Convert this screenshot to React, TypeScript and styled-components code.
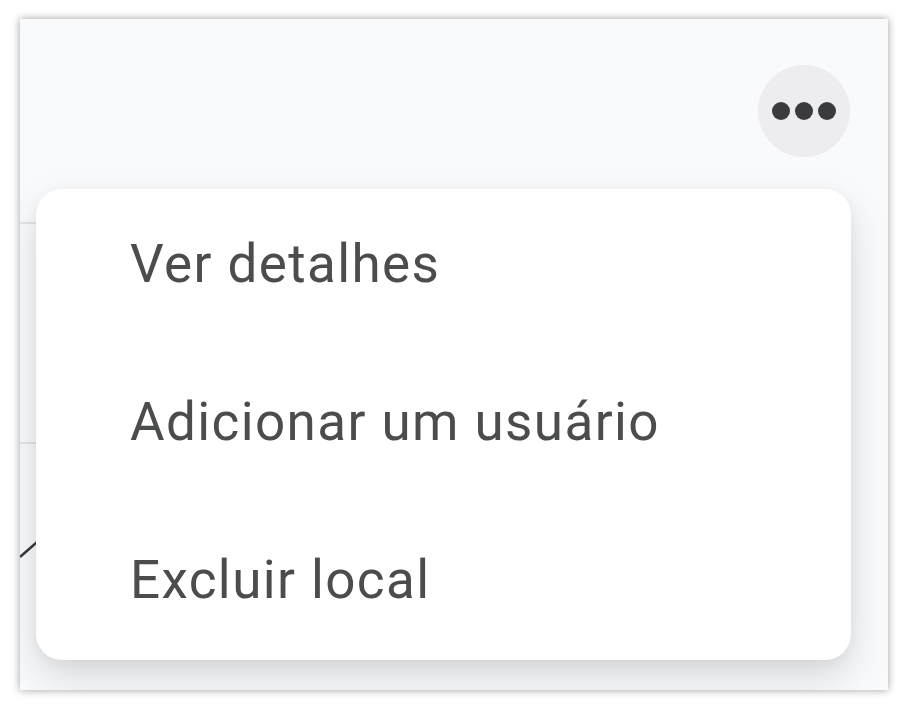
import styled, { createGlobalStyle } from 'styled-components';

const GlobalStyle = createGlobalStyle`
  html, body {
    margin: 0;
    padding: 0;
    background: #ffffff;
  }
  body {
    font-family: Roboto, 'Noto Sans', Arial, sans-serif;
  }
`;

const Page = styled.div`
  box-sizing: border-box;
  width: 910px;
  height: 710px;
  padding: 19px 22px 20px 20px;
`;

const Window = styled.div`
  position: relative;
  height: 100%;
  background: #f9fafc;
  box-shadow: 0 0 8px rgba(0, 0, 0, 0.38);
  overflow: hidden;
`;

const Header = styled.header`
  display: flex;
  justify-content: flex-end;
  padding: 46px 38px 0 0;
`;

const MoreButton = styled.button`
  width: 92px;
  height: 92px;
  border: none;
  border-radius: 50%;
  background: #ececf1;
  display: flex;
  align-items: center;
  justify-content: center;
  padding: 0;
  cursor: pointer;
`;

const Table = styled.div`
  display: flex;
  flex-direction: column;
  width: 320px;
  margin-top: 65px;
`;

const TableRow = styled.div`
  height: 218px;
  border-top: 2px solid #e3e4e6;
`;

const Chart = styled.svg`
  display: block;
  margin-top: 90px;
`;

const Menu = styled.ul`
  position: absolute;
  left: 16px;
  top: 170px;
  width: 815px;
  height: 471px;
  box-sizing: border-box;
  margin: 0;
  padding: 5px 0 10px;
  list-style: none;
  display: flex;
  flex-direction: column;
  gap: 18px;
  background: #ffffff;
  border-radius: 26px;
  box-shadow: 0 18px 40px rgba(0, 0, 0, 0.13), 0 4px 14px rgba(0, 0, 0, 0.05);
`;

const MenuItem = styled.li`
  height: 140px;
  display: flex;
  align-items: center;
  padding-left: 94px;
  font-size: 53px;
  letter-spacing: 1.4px;
  color: #4b4c4e;
  cursor: pointer;
`;

const items = ['Ver detalhes', 'Adicionar um usuário', 'Excluir local'];

export default function App() {
  return (
    <>
      <GlobalStyle />
      <Page>
        <Window>
          <Header>
            <MoreButton aria-label="Mais opções">
              <svg width="66" height="20" viewBox="0 0 66 20">
                <circle cx="10" cy="10" r="9" fill="#3a3b3d" />
                <circle cx="33" cy="10" r="9" fill="#3a3b3d" />
                <circle cx="56" cy="10" r="9" fill="#3a3b3d" />
              </svg>
            </MoreButton>
          </Header>
          <Table>
            <TableRow />
            <TableRow>
              <Chart width="60" height="40" viewBox="0 0 60 40">
                <path d="M0 23 L40 -12" stroke="#3a3b3d" strokeWidth="2.5" fill="none" />
              </Chart>
            </TableRow>
          </Table>
          <Menu>
            {items.map((label) => (
              <MenuItem key={label}>{label}</MenuItem>
            ))}
          </Menu>
        </Window>
      </Page>
    </>
  );
}
